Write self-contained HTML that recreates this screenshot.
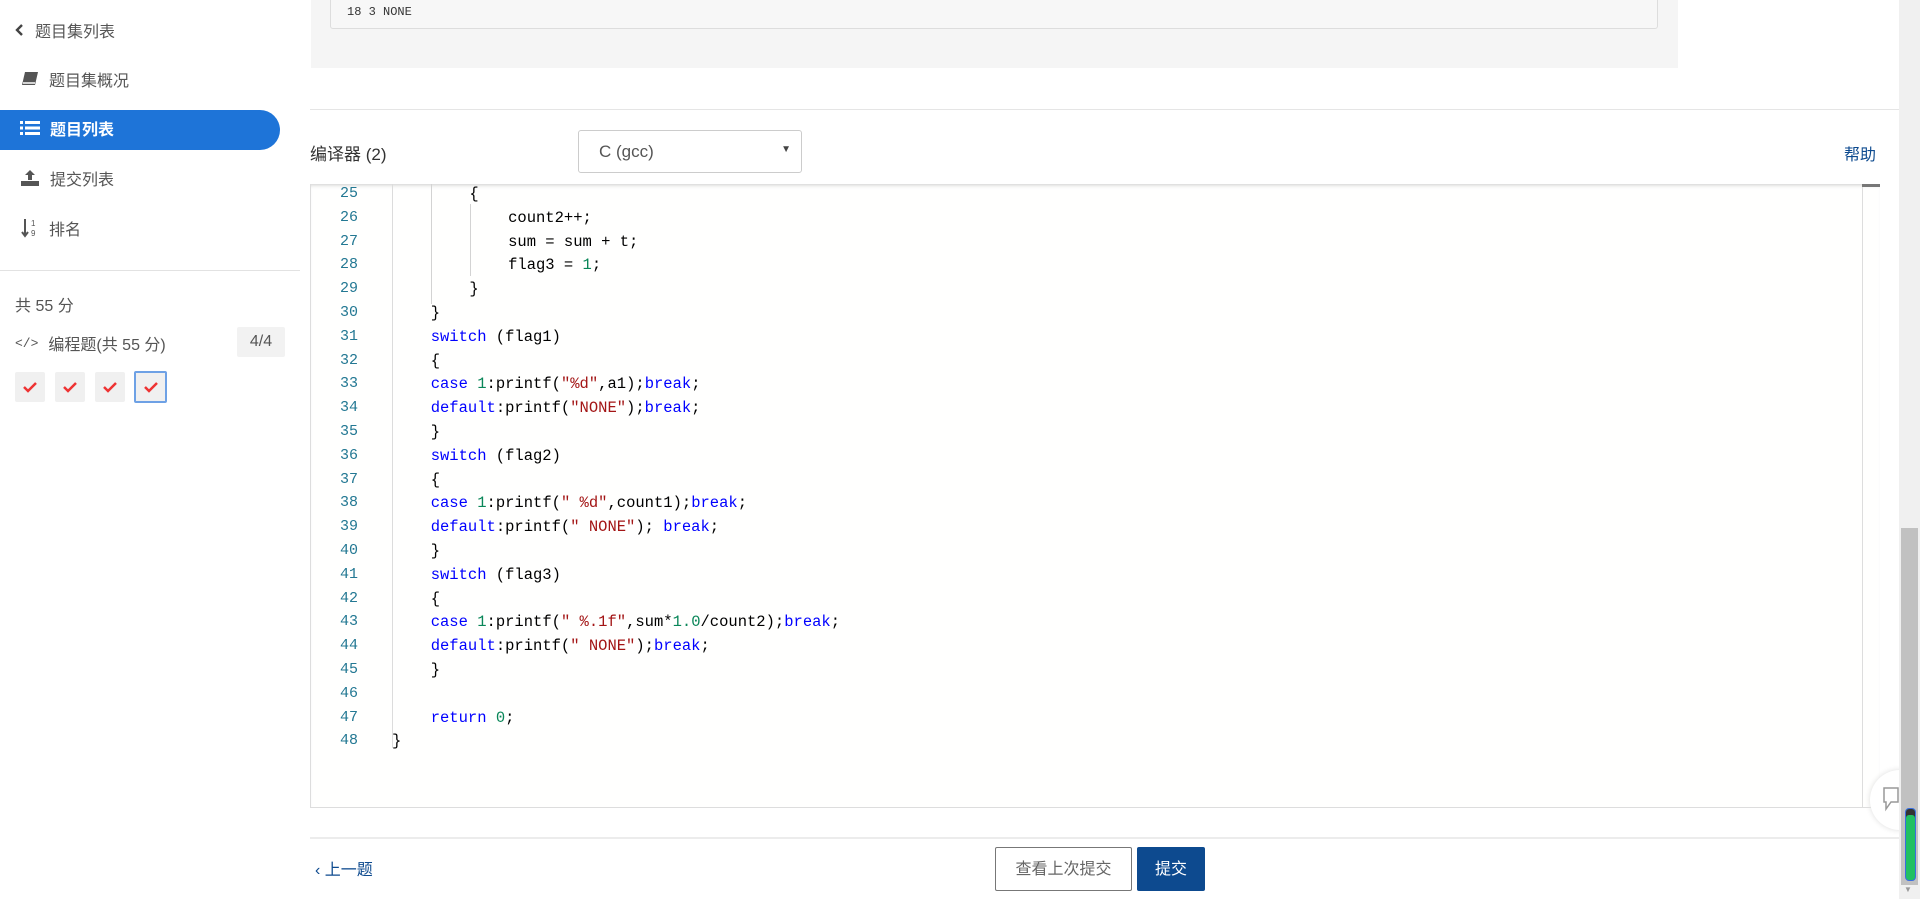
<!DOCTYPE html>
<html><head><meta charset="utf-8">
<style>
*{margin:0;padding:0;box-sizing:border-box}
body{width:1920px;height:899px;overflow:hidden;background:#fff;font-family:"Liberation Sans","Noto Sans CJK SC",sans-serif;color:#333;position:relative}
.abs{position:absolute}
.nav{position:absolute;left:0;font-size:16px;color:#555;display:flex;align-items:center}
.nav svg{margin-right:10px}
.code{position:absolute;left:310px;top:184px;width:1570px;height:624px;border:1px solid #ddd;border-top:none;border-right:none;background:#fffffe;overflow:hidden;box-shadow:inset 0 4px 4px -3px #ccc}
.ln{position:absolute;width:48px;text-align:right;color:#237893;font-family:"Liberation Mono",monospace;font-size:15px}
.cl{position:absolute;white-space:pre;font-family:"Liberation Mono",monospace;font-size:15.5px;color:#000}
.k{color:#0000ff}.n{color:#098658}.s{color:#a31515}
.g{position:absolute;width:1px;background:#d3d3d3}
.chk{position:absolute;top:372px;width:30px;height:30px;background:#f0f0f0;border-radius:2px;display:flex;align-items:center;justify-content:center}
</style></head><body>
<!-- sidebar -->
<div class="nav" style="top:18px;left:15px"><svg width="10" height="14" viewBox="0 0 10 14"><path d="M7 2L2 7l5 5" stroke="#444" stroke-width="2.4" fill="none"/></svg><span>题目集列表</span></div>
<div class="nav" style="top:67px;left:21px"><svg width="18" height="16" viewBox="0 0 18 16"><path d="M4 1h13l-3 13H1z" fill="#555"/><path d="M2 12h12" stroke="#fff" stroke-width="1.5"/></svg>题目集概况</div>
<div class="abs" style="left:0;top:110px;width:280px;height:40px;background:#1e74d8;border-radius:0 20px 20px 0"></div>
<div class="nav" style="top:116px;left:20px;color:#fff;font-weight:bold"><svg width="20" height="16" viewBox="0 0 20 16"><g fill="#fff"><rect x="0" y="1" width="3" height="3"/><rect x="5" y="1" width="15" height="3"/><rect x="0" y="6.5" width="3" height="3"/><rect x="5" y="6.5" width="15" height="3"/><rect x="0" y="12" width="3" height="3"/><rect x="5" y="12" width="15" height="3"/></g></svg>题目列表</div>
<div class="nav" style="top:166px;left:20px"><svg width="20" height="18" viewBox="0 0 20 18"><path d="M10 1l5 5h-3v5H8V6H5z" fill="#555"/><rect x="1" y="12" width="18" height="5" fill="#555"/></svg>提交列表</div>
<div class="nav" style="top:216px;left:21px"><svg width="18" height="20" viewBox="0 0 18 20"><path d="M4 1v16M1 14l3 4 3-4" stroke="#555" stroke-width="2" fill="none"/><text x="10" y="8" font-size="8" fill="#555" font-family="Liberation Sans">1</text><text x="10" y="18" font-size="8" fill="#555" font-family="Liberation Sans">9</text></svg>排名</div>
<div class="abs" style="left:0;top:270px;width:300px;height:1px;background:#e2e2e2"></div>
<div class="abs" style="left:15px;top:292px;font-size:16px;color:#555">共 55 分</div>
<div class="abs" style="left:15px;top:331px;font-size:16px;color:#555;display:flex;align-items:center"><span style="font-family:'Liberation Mono';font-size:13px;margin-right:10px">&lt;/&gt;</span>编程题(共 55 分)</div>
<div class="abs" style="left:237px;top:327px;width:48px;height:30px;background:#f2f2f2;border-radius:2px;font-size:16px;color:#555;text-align:center;line-height:30px">4/4</div>
<div class="chk" style="left:15px"><svg width="16" height="12"><path d="M2 6l4 4 8-8" stroke="#e33" stroke-width="2.5" fill="none"/></svg></div>
<div class="chk" style="left:55px"><svg width="16" height="12"><path d="M2 6l4 4 8-8" stroke="#e33" stroke-width="2.5" fill="none"/></svg></div>
<div class="chk" style="left:95px"><svg width="16" height="12"><path d="M2 6l4 4 8-8" stroke="#e33" stroke-width="2.5" fill="none"/></svg></div>
<div class="chk" style="left:134px;top:371px;width:33px;height:32px;border:2px solid #6ea1e5"><svg width="16" height="12"><path d="M2 6l4 4 8-8" stroke="#e33" stroke-width="2.5" fill="none"/></svg></div>

<!-- top sample box -->
<div class="abs" style="left:311px;top:0;width:1367px;height:68px;background:#f5f5f5"></div>
<div class="abs" style="left:330px;top:-4px;width:1328px;height:33px;background:#f7f7f7;border:1px solid #ddd;border-radius:3px;font-family:'Liberation Mono',monospace;font-size:12px;color:#333;padding:8px 16px 0">18 3 NONE</div>
<div class="abs" style="left:310px;top:109px;width:1589px;height:1px;background:#e5e5e5"></div>

<div class="abs" style="left:310px;top:140px;font-size:17px;color:#333">编译器 (2)</div>
<div class="abs" style="left:578px;top:130px;width:224px;height:43px;border:1px solid #ccc;border-radius:3px;font-size:17px;color:#555;padding:11px 0 0 20px">C (gcc)<span style="position:absolute;right:10px;top:13px;font-size:10px;color:#444">▼</span></div>
<div class="abs" style="left:1844px;top:141px;font-size:16px;color:#0d4a8f">帮助</div>

<!-- editor -->
<div class="code">
<div class="g" style="left:81px;top:0;height:564px;background:#dcdcdc"></div>
<div class="g" style="left:120px;top:0;height:120px"></div>
<div class="g" style="left:159px;top:20px;height:72px"></div>
<div class="abs" style="right:0;top:0;width:18px;height:624px;border-left:1px solid #ddd"></div>
<div class="abs" style="right:0;top:0;width:18px;height:3px;background:#777"></div>
</div>
<div id="lines"></div>

<!-- feedback bubble -->
<div class="abs" style="left:1870px;top:770px;width:60px;height:60px;border-radius:50%;background:#fff;box-shadow:0 0 6px #ddd"></div>
<svg class="abs" style="left:1883px;top:787px" width="16" height="26"><path d="M1 1h14v14H8l-5 7v-7H1z" stroke="#999" stroke-width="1.5" fill="#fff"/></svg>

<!-- footer -->
<div class="abs" style="left:310px;top:837px;width:1589px;height:2px;background:#ececec"></div>
<div class="abs" style="left:315px;top:856px;font-size:16px;color:#0d4a8f">‹ 上一题</div>
<div class="abs" style="left:995px;top:847px;width:137px;height:44px;border:1px solid #777;border-radius:2px;font-size:16px;color:#666;text-align:center;line-height:44px">查看上次提交</div>
<div class="abs" style="left:1137px;top:847px;width:68px;height:44px;background:#0d4a8f;border-radius:2px;font-size:16px;color:#fff;text-align:center;line-height:46px">提交</div>

<!-- page scrollbar -->
<div class="abs" style="left:1899px;top:0;width:21px;height:899px;background:#f0f0f0"></div>
<div class="abs" style="left:1901px;top:528px;width:17px;height:357px;background:#c1c1c1"></div>
<div class="abs" style="left:1905px;top:808px;width:11px;height:73px;border-radius:4px;background:#21c062;border:1px solid #3a6ee0;box-shadow:inset 0 6px 0 #333"></div>
<div class="abs" style="left:1904px;top:885px;font-size:8px;color:#999">▼</div>

<script>
var L=[
[2,'{'],
[3,'count2++;'],
[3,'sum = sum + t;'],
[3,'flag3 = <n>1</n>;'],
[2,'}'],
[1,'}'],
[1,'<k>switch</k> (flag1)'],
[1,'{'],
[1,'<k>case</k> <n>1</n>:printf(<s>"%d"</s>,a1);<k>break</k>;'],
[1,'<k>default</k>:printf(<s>"NONE"</s>);<k>break</k>;'],
[1,'}'],
[1,'<k>switch</k> (flag2)'],
[1,'{'],
[1,'<k>case</k> <n>1</n>:printf(<s>" %d"</s>,count1);<k>break</k>;'],
[1,'<k>default</k>:printf(<s>" NONE"</s>); <k>break</k>;'],
[1,'}'],
[1,'<k>switch</k> (flag3)'],
[1,'{'],
[1,'<k>case</k> <n>1</n>:printf(<s>" %.1f"</s>,sum*<n>1.0</n>/count2);<k>break</k>;'],
[1,'<k>default</k>:printf(<s>" NONE"</s>);<k>break</k>;'],
[1,'}'],
[0,''],
[1,'<k>return</k> <n>0</n>;'],
[0,'}']];
var h='';
for(var i=0;i<L.length;i++){
 var t=183+i*23.8;
 var c=L[i][1].replace(/<(k|n|s)>/g,'<span class="$1">').replace(/<\/(k|n|s)>/g,'</span>');
 h+='<div class="ln" style="top:'+t+'px;left:310px;line-height:22px">'+(25+i)+'</div>';
 h+='<div class="cl" style="top:'+t+'px;left:'+(392+L[i][0]*38.7)+'px;line-height:22px">'+c+'</div>';
}
document.getElementById('lines').innerHTML=h;
</script>
</body></html>
